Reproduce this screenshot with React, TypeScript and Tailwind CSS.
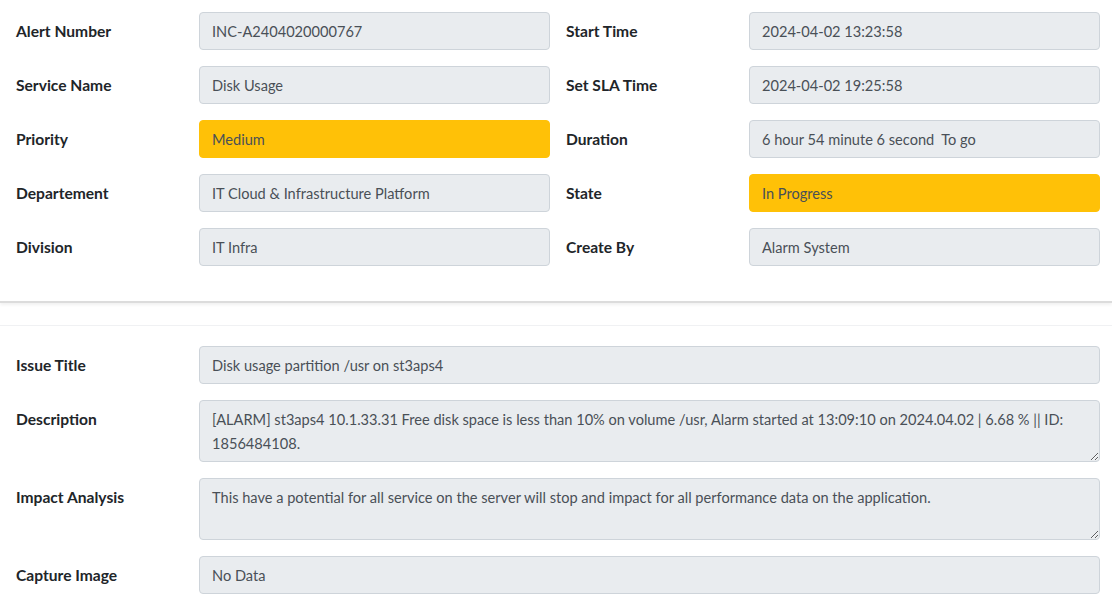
const top: [string, string, boolean, string, string, boolean][] = [
  ["Alert Number", "INC-A2404020000767", false, "Start Time", "2024-04-02 13:23:58", false],
  ["Service Name", "Disk Usage", false, "Set SLA Time", "2024-04-02 19:25:58", false],
  ["Priority", "Medium", true, "Duration", "6 hour 54 minute 6 second  To go", false],
  ["Departement", "IT Cloud & Infrastructure Platform", false, "State", "In Progress", true],
  ["Division", "IT Infra", false, "Create By", "Alarm System", false],
]

function Field({ value, warn }: { value: string; warn?: boolean }) {
  return (
    <div
      className={`h-[38px] rounded border px-3 pt-px flex items-center whitespace-pre text-[#495057] ${
        warn ? "bg-[#ffc107] border-[#ffc107]" : "bg-[#e9ecef] border-[#ced4da]"
      }`}
    >
      {value}
    </div>
  )
}

function Label({ children }: { children: string }) {
  return (
    <div className="w-[183px] shrink-0 pt-[7px] leading-6 text-[15.6px] font-bold text-[#212529]">{children}</div>
  )
}

const area =
  "flex-1 h-[62px] rounded border border-[#ced4da] bg-[#e9ecef] px-3 pt-[7px] pb-[5px] leading-6 text-[#495057] resize-y outline-none"

export default function App() {
  return (
    <div className="bg-white text-[14.6px] min-h-screen" style={{ fontFamily: "Lato, sans-serif" }}>
      <div className="px-4 pr-3 pt-3 pb-[35px] border-b-2 border-[#dcdcdc] shadow-[0_2px_3px_rgba(0,0,0,0.06)]">
        <div className="flex flex-col gap-4">
          {top.map(([l1, v1, w1, l2, v2, w2]) => (
            <div key={l1} className="flex items-start">
              <Label>{l1}</Label>
              <div className="w-[351px] shrink-0">
                <Field value={v1} warn={w1} />
              </div>
              <div className="w-4 shrink-0" />
              <Label>{l2}</Label>
              <div className="flex-1">
                <Field value={v2} warn={w2} />
              </div>
            </div>
          ))}
        </div>
      </div>

      <div className="mt-[22px] border-t border-[#f0f1f3] px-4 pr-3 pt-5 flex flex-col gap-4">
        <div className="flex items-start">
          <Label>Issue Title</Label>
          <div className="flex-1">
            <Field value="Disk usage partition /usr on st3aps4" />
          </div>
        </div>
        <div className="flex items-start">
          <Label>Description</Label>
          <textarea
            readOnly
            rows={2}
            className={area}
            value="[ALARM] st3aps4 10.1.33.31 Free disk space is less than 10% on volume /usr, Alarm started at 13:09:10 on 2024.04.02 | 6.68 % || ID: 1856484108."
          />
        </div>
        <div className="flex items-start">
          <Label>Impact Analysis</Label>
          <textarea
            readOnly
            rows={2}
            className={area}
            value="This have a potential for all service on the server will stop and impact for all performance data on the application."
          />
        </div>
        <div className="flex items-start">
          <Label>Capture Image</Label>
          <div className="flex-1">
            <Field value="No Data" />
          </div>
        </div>
      </div>
    </div>
  )
}
